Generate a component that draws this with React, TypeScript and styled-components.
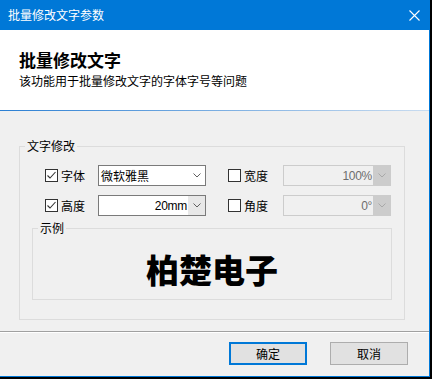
import * as React from "react";
import styled, { createGlobalStyle } from "styled-components";

const GlobalStyle = createGlobalStyle`
  html, body {
    margin: 0;
    padding: 0;
    background: #000;
  }
  * {
    box-sizing: border-box;
  }
`;

const FONT = `"Noto Sans CJK SC", "Microsoft YaHei", sans-serif`;

const Window = styled.div`
  width: 430px;
  height: 377px;
  background: #f0f0f0;
  border-right: 1px solid #0078d7;
  border-bottom: 1px solid #0078d7;
  font-family: ${FONT};
  font-size: 12px;
  color: #000;
  display: flex;
  flex-direction: column;
  & > * {
    flex-shrink: 0;
  }
`;

const TitleBar = styled.div`
  height: 30px;
  margin-right: -1px;
  background: #0078d7;
  color: #fff;
  display: flex;
  align-items: center;
  justify-content: space-between;
  padding: 0 10px 0 8px;
  line-height: 16px;
`;

const CloseButton = styled.div`
  width: 12px;
  height: 12px;
  display: flex;
  align-items: center;
  justify-content: center;
`;

const Header = styled.div`
  height: 80px;
  background: #fff;
  padding: 19px 19px 0;
`;

const HeaderTitle = styled.div`
  font-size: 17px;
  font-weight: bold;
  line-height: 22px;
`;

const HeaderText = styled.div`
  margin-top: 2px;
  line-height: 16px;
`;

const HeaderLine = styled.div`
  height: 1px;
  background: linear-gradient(to right, #2b7fd3, #c9dcf0);
`;

const Body = styled.div`
  padding: 28px 24px 0 19px;
`;

const Group = styled.fieldset<{ $inset?: boolean }>`
  margin: ${(p) => (p.$inset ? "5px 12px 0" : "0")};
  padding: 0;
  min-width: 0;
  border: 1px solid #dcdcdc;
`;

const Legend = styled.legend`
  margin-left: 5px;
  padding: 0 2px;
  line-height: 14px;
`;

const Rows = styled.div`
  padding-top: 12px;
  display: flex;
  flex-direction: column;
  gap: 9px;
`;

const Row = styled.div`
  display: flex;
  align-items: center;
  gap: 22px;
  padding-left: 25px;
`;

const Field = styled.div`
  display: flex;
  align-items: center;
`;

const CheckLabel = styled.label<{ $width: number }>`
  width: ${(p) => p.$width}px;
  display: flex;
  align-items: center;
  gap: 3px;
  line-height: 16px;
`;

const Box = styled.span`
  width: 13px;
  height: 13px;
  border: 1px solid #333;
  background: #fff;
  display: flex;
  align-items: center;
  justify-content: center;
`;

const Combo = styled.div<{ $disabled?: boolean }>`
  width: 108px;
  height: 21px;
  border: 1px solid ${(p) => (p.$disabled ? "#cccccc" : "#7a7a7a")};
  background: ${(p) => (p.$disabled ? "#f0f0f0" : "#fff")};
  color: ${(p) => (p.$disabled ? "#6d6d6d" : "#000")};
  display: flex;
  align-items: stretch;
`;

const ComboValue = styled.div<{ $right?: boolean }>`
  flex: 1;
  display: flex;
  align-items: center;
  justify-content: ${(p) => (p.$right ? "flex-end" : "flex-start")};
  padding: 0 1px 0 2px;
  line-height: 16px;
  font-family: ${(p) => (p.$right ? `"Liberation Sans", ${FONT}` : FONT)};
  letter-spacing: ${(p) => (p.$right ? "-0.3px" : "0")};
`;

const DropButton = styled.div<{ $tone: "none" | "light" | "dim" }>`
  width: 17px;
  display: flex;
  align-items: center;
  justify-content: center;
  background: ${(p) =>
    p.$tone === "dim" ? "#cccccc" : p.$tone === "light" ? "#e8e8e8" : "transparent"};
`;

const Preview = styled.div`
  height: 64px;
  padding-top: 13px;
  text-align: center;
  font-size: 33px;
  font-weight: 900;
  line-height: 42px;
`;

const GroupEnd = styled.div`
  height: 19px;
`;

const Separator = styled.div`
  margin-top: 11px;
  height: 2px;
  border-top: 1px solid #a0a0a0;
  border-bottom: 1px solid #fff;
`;

const Footer = styled.div`
  height: 42px;
  padding: 9px 21px 0 0;
  display: flex;
  justify-content: flex-end;
  align-items: flex-start;
  gap: 23px;
`;

const Button = styled.button<{ $primary?: boolean }>`
  width: 78px;
  height: 23px;
  padding: 0;
  background: #e1e1e1;
  border: ${(p) => (p.$primary ? "2px solid #0078d7" : "1px solid #adadad")};
  font-family: ${FONT};
  font-size: 12px;
  line-height: 16px;
  color: #000;
`;

const Chevron = ({ color }: { color: string }) => (
  <svg width="8" height="5" viewBox="0 0 8 5">
    <polyline points="0.5,0.5 4,4 7.5,0.5" fill="none" stroke={color} strokeWidth="1" />
  </svg>
);

const Check = ({ checked, label, width }: { checked: boolean; label: string; width: number }) => (
  <CheckLabel $width={width}>
    <Box>
      {checked && (
        <svg width="11" height="11" viewBox="0 0 11 11">
          <polyline points="1.5,5.5 4,8 9.5,2" fill="none" stroke="#333" strokeWidth="1.1" />
        </svg>
      )}
    </Box>
    {label}
  </CheckLabel>
);

type ComboProps = {
  value: string;
  right?: boolean;
  disabled?: boolean;
  tone: "none" | "light" | "dim";
};

const ComboBox = ({ value, right, disabled, tone }: ComboProps) => (
  <Combo $disabled={disabled}>
    <ComboValue $right={right}>{value}</ComboValue>
    <DropButton $tone={tone}>
      <Chevron color={disabled ? "#a8a8a8" : "#606060"} />
    </DropButton>
  </Combo>
);

const App = () => {
  return (
    <>
      <GlobalStyle />
      <Window>
        <TitleBar>
          <span>批量修改文字参数</span>
          <CloseButton>
            <svg width="11" height="11" viewBox="0 0 11 11">
              <path d="M0.5 0.5 L10.5 10.5 M10.5 0.5 L0.5 10.5" stroke="#fff" strokeWidth="1.1" />
            </svg>
          </CloseButton>
        </TitleBar>

        <Header>
          <HeaderTitle>批量修改文字</HeaderTitle>
          <HeaderText>该功能用于批量修改文字的字体字号等问题</HeaderText>
        </Header>
        <HeaderLine />

        <Body>
          <Group>
            <Legend>文字修改</Legend>
            <Rows>
              <Row>
                <Field>
                  <Check checked label="字体" width={53} />
                  <ComboBox value="微软雅黑" tone="none" />
                </Field>
                <Field>
                  <Check checked={false} label="宽度" width={55} />
                  <ComboBox value="100%" right disabled tone="dim" />
                </Field>
              </Row>
              <Row>
                <Field>
                  <Check checked label="高度" width={53} />
                  <ComboBox value="20mm" right tone="light" />
                </Field>
                <Field>
                  <Check checked={false} label="角度" width={55} />
                  <ComboBox value="0°" right disabled tone="dim" />
                </Field>
              </Row>
            </Rows>
            <Group $inset>
              <Legend>示例</Legend>
              <Preview>柏楚电子</Preview>
            </Group>
            <GroupEnd />
          </Group>
        </Body>

        <Separator />
        <Footer>
          <Button $primary>确定</Button>
          <Button>取消</Button>
        </Footer>
      </Window>
    </>
  );
};

export default App;
